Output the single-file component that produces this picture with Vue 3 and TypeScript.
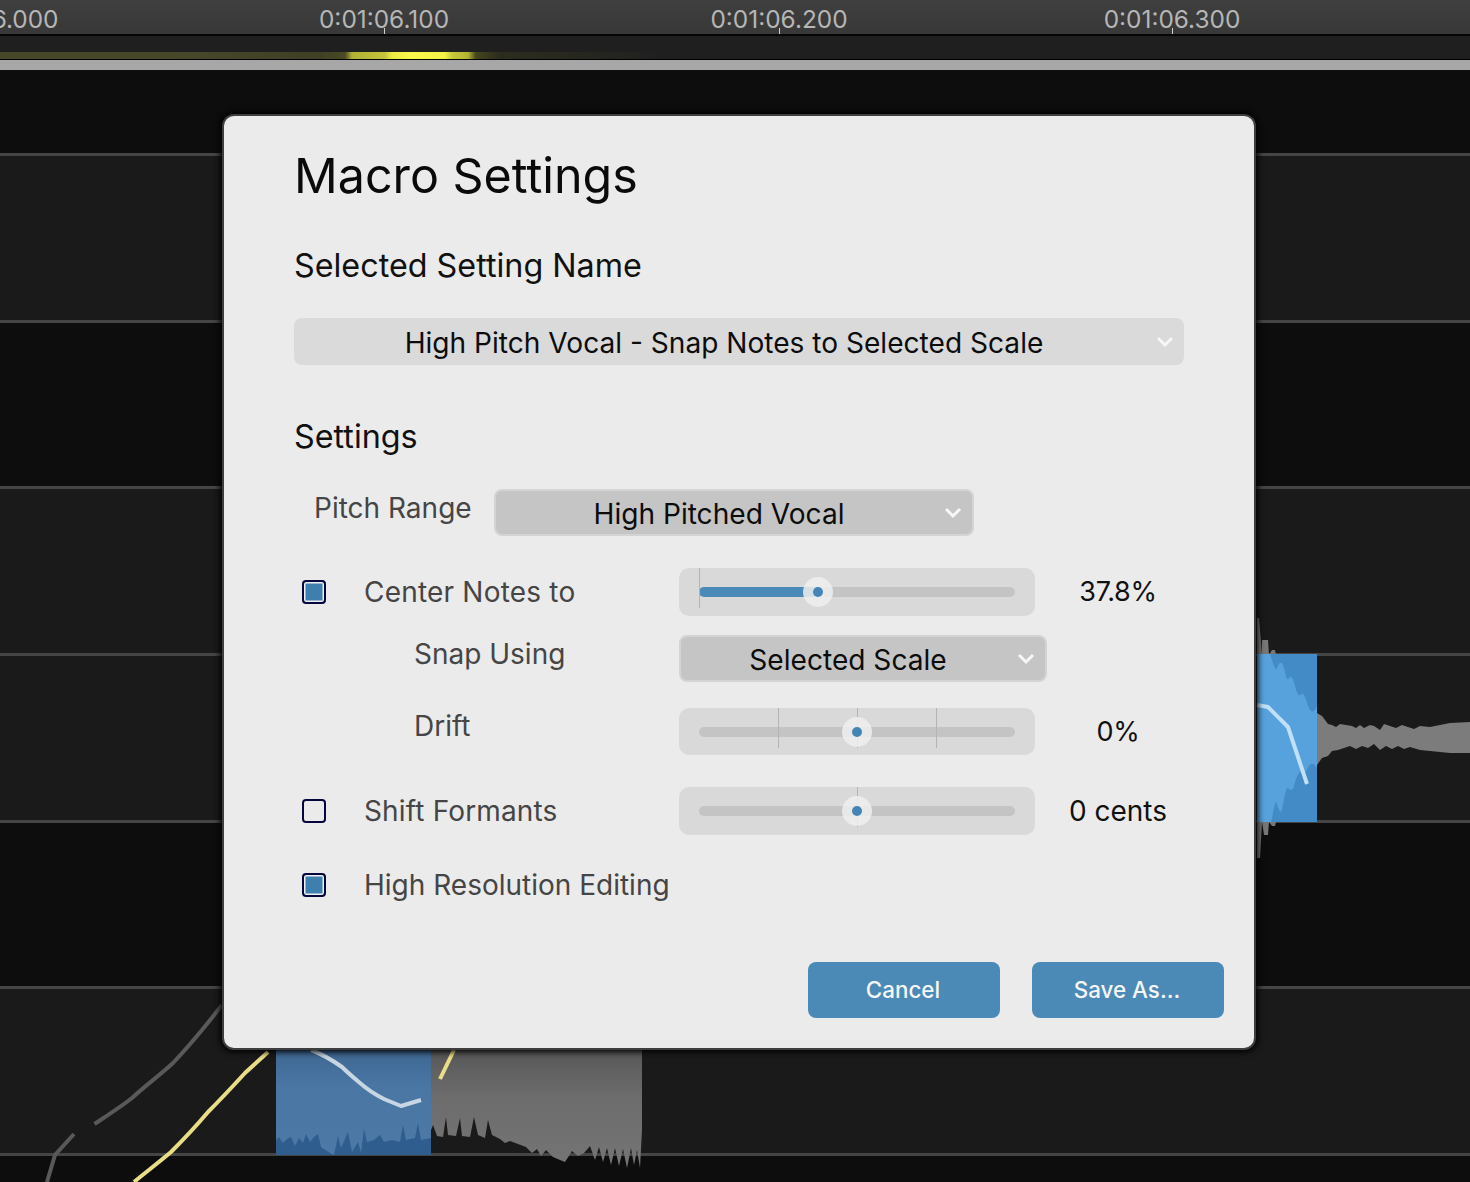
<script setup lang="ts">
const ticks = [
  { label: '0:01:06.000', x: -10 },
  { label: '0:01:06.100', x: 384 },
  { label: '0:01:06.200', x: 779 },
  { label: '0:01:06.300', x: 1172 },
]
const lanes = [
  { h: 83, dark: true, first: true },
  { h: 167, dark: false, first: false },
  { h: 166, dark: true, first: false },
  { h: 167, dark: false, first: false },
  { h: 167, dark: false, first: false },
  { h: 166, dark: true, first: false },
  { h: 167, dark: false, first: false },
  { h: 40, dark: true, first: false },
]
const centerPct = 37.8
</script>

<template>
  <div class="stage">
    <header class="ruler">
      <template v-for="t in ticks" :key="t.label">
        <span class="tick-label" :style="{ left: t.x + 'px' }">{{ t.label }}</span>
        <i v-if="t.x > 0" class="tick" :style="{ left: t.x + 'px' }"></i>
      </template>
    </header>
    <div class="strip"><div class="heat"></div></div>
    <div class="bar"></div>
    <div class="lanes">
      <div
        v-for="(l, i) in lanes"
        :key="i"
        class="lane"
        :class="{ dark: l.dark, first: l.first }"
        :style="{ height: l.h + 'px' }"
      ></div>
    </div>

    <svg class="art" width="1470" height="1182" viewBox="0 0 1470 1182">
      <defs>
        <linearGradient id="blueTop" x1="0" y1="0" x2="0" y2="1">
          <stop offset="0" stop-color="#3e6690" />
          <stop offset="0.35" stop-color="#4a76a4" />
          <stop offset="1" stop-color="#4d79a6" />
        </linearGradient>
        <linearGradient id="grayTop" x1="0" y1="0" x2="0" y2="1">
          <stop offset="0" stop-color="#565656" />
          <stop offset="0.4" stop-color="#6c6c6c" />
          <stop offset="1" stop-color="#757575" />
        </linearGradient>
      </defs>

      <!-- right clip -->
      <path fill="#777" d="M1257 618L1259 618L1262 655L1262 640L1268 640L1269 655L1272 650L1275 650L1276 655L1276 822L1275 826L1272 826L1269 822L1268 835L1264 835L1262 822L1260 858L1257 858Z" />
      <rect x="1257" y="654" width="60" height="168" fill="#428bc6" />
      <path fill="#57a1dc" d="M1257 654L1270 654C1273 662 1275 672 1277 668C1279 662 1282 660 1284 668C1286 676 1287 682 1289 678C1291 674 1294 680 1296 690C1298 696 1300 696 1302 694C1304 692 1306 700 1309 708C1311 712 1314 714 1317 706L1317 768C1314 764 1312 762 1309 766C1306 772 1304 774 1302 772C1299 770 1296 778 1294 786C1292 792 1290 790 1288 788C1286 786 1284 800 1282 810C1280 816 1278 806 1276 802C1274 804 1273 816 1271 822L1257 822Z" />
      <path fill="none" stroke="#bfe0f6" stroke-width="4" stroke-linejoin="round" d="M1257 705L1268 707L1288 727L1307 784" />
      <path fill="#7c7c7c" d="M1317 713L1322 716L1328 724L1332 725L1336 727L1340 724L1346 725L1352 726L1356 728L1360 725L1364 728L1370 725L1374 726L1380 730L1384 724L1390 726L1396 728L1402 725L1408 727L1414 729L1420 726L1430 727L1440 725L1450 723L1470 722L1470 753L1450 753L1440 752L1430 751L1420 750L1410 747L1404 749L1398 746L1392 749L1386 746L1380 750L1374 744L1368 748L1362 746L1356 749L1350 746L1344 748L1338 750L1332 751L1328 756L1322 758L1317 765Z" />

      <!-- bottom left curves -->
      <path fill="none" stroke="#595959" stroke-width="4" d="M47 1182L55 1155L74 1134" />
      <path fill="none" stroke="#595959" stroke-width="4" d="M94.5 1124C108 1115 122 1106 132 1098C146 1085 160 1075 173 1063C190 1045 205 1027 222 1005" />
      <path fill="none" stroke="#e9de86" stroke-width="4" d="M134 1182C146 1172 158 1163 171 1152C185 1138 197 1125 208 1112C222 1098 234 1085 245 1073L268 1052" />

      <!-- bottom clips -->
      <rect x="276" y="1048" width="155" height="107" fill="url(#blueTop)" />
      <path fill="#2f5d8e" d="M276 1155L276 1140L279 1137L283 1143L287 1139L291 1137L295 1146L299 1138L303 1143L306 1134L310 1142L314 1137L318 1134L321 1147L330 1153L334 1155L338 1136L341 1148L348 1132L352 1152L358 1142L361 1153L364 1129L367 1142L374 1140L380 1135L384 1142L392 1140L400 1142L403 1125L406 1140L415 1138L418 1123L421 1140L431 1138L431 1155Z" />
      <path fill="none" stroke="#c8d6e4" stroke-width="4" stroke-linejoin="round" d="M311 1050C322 1054 332 1060 342 1067C348 1073 354 1078 360 1083C368 1090 376 1095 384 1099L401 1106L421 1100" />
      <path fill="url(#grayTop)" d="M431 1048L642 1048L642 1130L640 1168L637 1150L634 1165L631 1148L627 1168L623 1149L619 1166L615 1148L611 1165L607 1148L603 1162L599 1147L595 1160L590 1146L584 1153L578 1156L572 1151L565 1162L560 1160L553 1157L546 1150L541 1156L537 1149L532 1153L526 1147L518 1144L510 1141L505 1143L500 1139L492 1135L488 1120L485 1138L478 1135L474 1117L470 1137L462 1136L460 1118L456 1136L448 1135L446 1117L443 1137L437 1136L433 1125L431 1130Z" />
      <path fill="none" stroke="#e9de86" stroke-width="4" d="M454 1050L440 1079" />
    </svg>

    <section class="modal">
      <h1 class="title">Macro Settings</h1>
      <h2 class="section first-section">Selected Setting Name</h2>
      <div class="select wide">
        <span class="select-text">High Pitch Vocal - Snap Notes to Selected Scale</span>
        <svg class="chev" width="18" height="12" viewBox="0 0 18 12"><path d="M2 2L9 9L16 2" /></svg>
      </div>
      <h2 class="section second-section">Settings</h2>

      <div class="row pitch-row">
        <span class="label pitch-label">Pitch Range</span>
        <div class="select pitch">
          <span class="select-text">High Pitched Vocal</span>
          <svg class="chev" width="18" height="12" viewBox="0 0 18 12"><path d="M2 2L9 9L16 2" /></svg>
        </div>
      </div>

      <div class="row center-row">
        <div class="lead"><span class="check on"></span><span class="label tight-plus">Center Notes to</span></div>
        <div class="slider">
          <div class="track">
            <i class="mark" style="left: 0"></i>
            <div class="fill" :style="{ width: centerPct + '%' }"></div>
            <div class="thumb" :style="{ left: centerPct + '%' }"></div>
          </div>
        </div>
        <span class="value percent">37.8%</span>
      </div>

      <div class="row snap-row">
        <div class="sub up-9"><span class="label">Snap Using</span></div>
        <div class="select scale">
          <span class="select-text">Selected Scale</span>
          <svg class="chev" width="18" height="12" viewBox="0 0 18 12"><path d="M2 2L9 9L16 2" /></svg>
        </div>
      </div>

      <div class="row drift-row">
        <div class="sub up-11"><span class="label">Drift</span></div>
        <div class="slider">
          <div class="track">
            <i class="mark" style="left: 25%"></i>
            <i class="mark" style="left: 50%"></i>
            <i class="mark" style="left: 75%"></i>
            <div class="thumb" style="left: 50%"></div>
          </div>
        </div>
        <span class="value percent">0%</span>
      </div>

      <div class="row shift-row">
        <div class="lead"><span class="check"></span><span class="label shift-text">Shift Formants</span></div>
        <div class="slider">
          <div class="track">
            <i class="mark" style="left: 50%"></i>
            <div class="thumb" style="left: 50%"></div>
          </div>
        </div>
        <span class="value">0 cents</span>
      </div>

      <div class="row res-row">
        <div class="lead wide-lead"><span class="check on"></span><span class="label">High Resolution Editing</span></div>
      </div>

      <footer class="actions">
        <button class="btn" type="button">Cancel</button>
        <button class="btn" type="button">Save As...</button>
      </footer>
    </section>
  </div>
</template>

<style>
html, body { margin: 0; background: #0d0d0d; }
</style>

<style scoped>
.stage {
  position: relative;
  width: 1470px;
  height: 1182px;
  overflow: hidden;
  background: #0d0d0d;
  font-family: Inter, "Liberation Sans", sans-serif;
}
.ruler {
  position: relative;
  height: 34px;
  background: linear-gradient(#3f3f3f, #383838);
  border-bottom: 2px solid #050505;
}
.tick-label {
  position: absolute;
  top: 4px;
  transform: translateX(-50%);
  font-size: 24.4px;
  line-height: 30px;
  color: #b6b6b6;
  white-space: nowrap;
}
.tick {
  position: absolute;
  top: 28px;
  width: 1px;
  height: 6px;
  background: #cfcfcf;
}
.strip {
  height: 24px;
  background: #1f1f1f;
  border-bottom: 1px solid #000;
  box-sizing: border-box;
  display: flex;
  align-items: flex-end;
}
.heat {
  width: 100%;
  height: 7px;
  background: linear-gradient(90deg,
    #47472a 0, #47472a 180px, #3f3f26 320px, #4a4a24 345px,
    #b0b036 352px, #c4c43a 385px, #ecec44 392px, #fbf84a 412px, #f4f046 445px,
    #c8c83a 452px, #b4b434 468px, #45451f 476px, #2c2c1e 500px,
    #242420 620px, #1f1f1f 660px);
}
.bar {
  height: 10px;
  background: #a7a7a7;
}
.lanes { display: flex; flex-direction: column; }
.lane {
  box-sizing: border-box;
  border-top: 3px solid #454545;
  background: #1a1a1a;
  flex: none;
}
.lane.dark { background: #0d0d0d; }
.lane.first { border-top: 0; }
.art {
  position: absolute;
  inset: 0;
}
.modal {
  position: absolute;
  left: 222px;
  top: 114px;
  width: 1034px;
  height: 936px;
  box-sizing: border-box;
  padding: 0 30px 0 70px;
  background: #ebebeb;
  border: 2px solid #3e3e3e;
  border-radius: 12px;
  box-shadow: 0 0 6px 2px #000;
  display: flex;
  flex-direction: column;
}
.title {
  margin: 30px 0 0 0;
  height: 60px;
  font-size: 48.4px;
  line-height: 60px;
  font-weight: 400;
  color: #0a0a0a;
}
.section {
  margin: 0;
  height: 40px;
  font-size: 32.3px;
  line-height: 40px;
  font-weight: 400;
  color: #111;
}
.first-section { margin-top: 40px; }
.second-section { margin-top: 52px; }
.select {
  position: relative;
  box-sizing: border-box;
  display: flex;
  align-items: center;
  justify-content: center;
  height: 47px;
  border-radius: 8px;
  font-size: 28.1px;
  color: #0c0c0c;
}
.select-text { transform: translateY(0.5px); }
.wide {
  width: 890px;
  margin-top: 32px;
  padding-right: 30px;
  background: #dadada;
}
.pitch, .scale {
  background: #c5c5c5;
  border: 2px solid #d4d4d4;
  padding-right: 30px;
}
.pitch { width: 480px; margin-left: 0; }
.scale { width: 368px; }
.chev {
  position: absolute;
  right: 10px;
  top: 50%;
  margin-top: -6px;
}
.chev path {
  fill: none;
  stroke: #f7f7f7;
  stroke-width: 3;
}
.row {
  display: grid;
  grid-template-columns: 385px 356px 166px;
  align-items: center;
}
.pitch-row {
  grid-template-columns: 200px 480px;
  margin-top: 32px;
  height: 47px;
}
.pitch-label { padding: 0 0 9px 20px; }
.center-row { margin-top: 32px; height: 48px; }
.snap-row { margin-top: 19px; height: 47px; }
.drift-row { margin-top: 26px; height: 47px; }
.shift-row { margin-top: 32px; height: 48px; }
.res-row { margin-top: 26px; height: 48px; }
.label {
  font-size: 28px;
  line-height: 36px;
  color: #454545;
  white-space: nowrap;
}
.tight-plus { letter-spacing: 0.2px; }
.shift-text { letter-spacing: 0.15px; }
.lead {
  display: flex;
  align-items: center;
  padding-left: 8px;
  gap: 38px;
}
.sub { padding-left: 120px; }
.up-9 { padding-bottom: 9px; }
.up-11 { padding-bottom: 11px; }
.check {
  box-sizing: border-box;
  width: 24px;
  height: 24px;
  flex: none;
  border: 2px solid #06063f;
  border-radius: 4px;
  background: #ebebeb;
}
.check.on {
  background: #3f7fae;
  box-shadow: inset 0 0 0 1.5px #f0f0f0;
}
.slider {
  box-sizing: border-box;
  height: 100%;
  padding: 0 20px;
  display: flex;
  align-items: center;
  border-radius: 10px;
  background: #d9d9d9;
}
.track {
  position: relative;
  width: 100%;
  height: 10px;
  border-radius: 5px;
  background: #c4c4c4;
}
.mark {
  position: absolute;
  top: -19px;
  width: 1px;
  height: 40px;
  background: #b4b4b4;
}
.fill {
  height: 100%;
  border-radius: 5px 0 0 5px;
  background: #4b8ab8;
}
.thumb {
  position: absolute;
  top: 50%;
  width: 30px;
  height: 30px;
  border-radius: 50%;
  transform: translate(-50%, -50%);
  background: rgba(238, 238, 238, 0.85);
}
.thumb::after {
  content: "";
  position: absolute;
  left: 10px;
  top: 10px;
  width: 10px;
  height: 10px;
  border-radius: 50%;
  background: #4485b5;
}
.value {
  text-align: center;
  font-size: 28px;
  line-height: 36px;
  color: #111;
  white-space: nowrap;
}
.percent { font-size: 27px; letter-spacing: -0.3px; }
.drift-row .value { padding-top: 1px; }
.actions {
  display: flex;
  justify-content: flex-end;
  gap: 32px;
  margin-top: 53px;
}
.btn {
  width: 192px;
  height: 56px;
  padding: 0 2px 2px 0;
  border: 0;
  border-radius: 8px;
  background: #4b8ab6;
  color: #f6f6f6;
  font-family: inherit;
  font-size: 22.4px;
  font-weight: 500;
}
</style>
